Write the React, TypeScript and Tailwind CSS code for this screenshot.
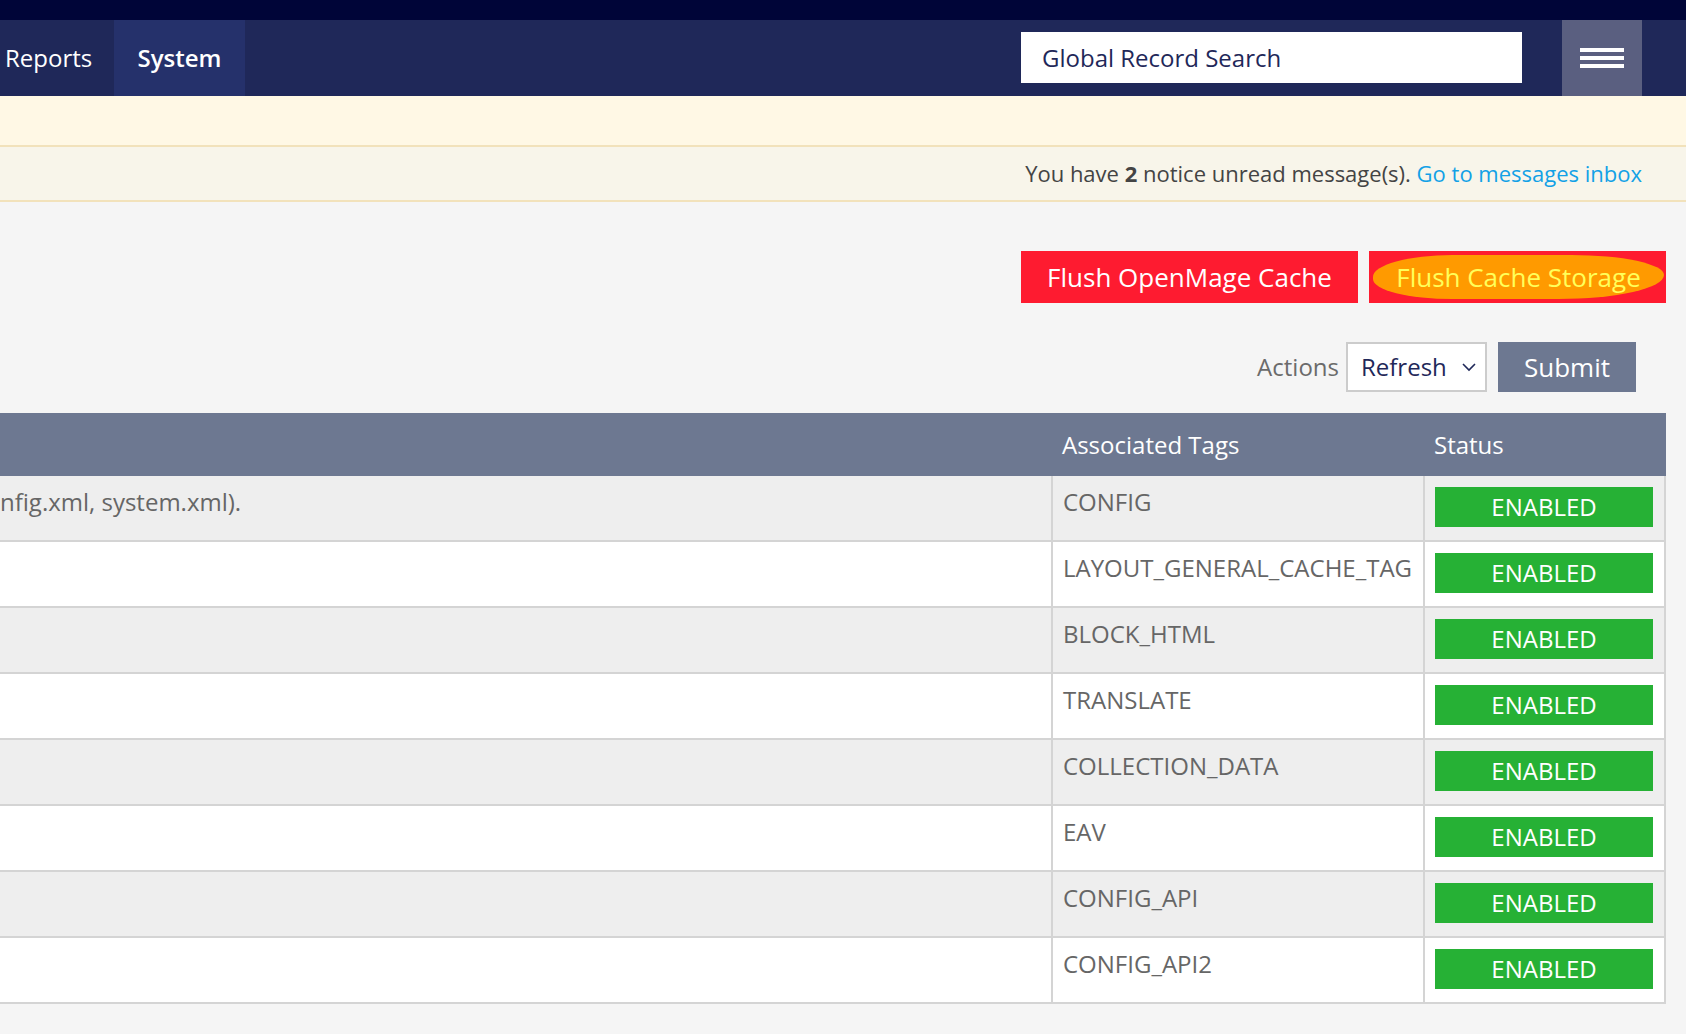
import React from "react";

const rows = [
    { desc: "nfig.xml, system.xml).", tag: "CONFIG" },
    { desc: "", tag: "LAYOUT_GENERAL_CACHE_TAG" },
    { desc: "", tag: "BLOCK_HTML" },
    { desc: "", tag: "TRANSLATE" },
    { desc: "", tag: "COLLECTION_DATA" },
    { desc: "", tag: "EAV" },
    { desc: "", tag: "CONFIG_API" },
    { desc: "", tag: "CONFIG_API2" },
];

const App: React.FC = () => {
    return (
        <div className="min-h-[1034px] w-[1686px] overflow-hidden bg-[#f5f5f5] font-['Open_Sans',sans-serif]">
            <div className="h-[20px] bg-[#000538]" />
            <nav className="flex h-[76px] items-stretch bg-[#1f2859] text-[24px] text-white">
                <div className="flex w-[114px] items-center pl-[5px]">Reports</div>
                <div className="flex w-[131px] items-center justify-center bg-[#25316b] font-semibold">System</div>
                <div className="flex-1" />
                <div className="mt-[12px] flex h-[51px] w-[501px] items-center bg-white pl-[21px] text-[#1f2859]">
                    Global Record Search
                </div>
                <button className="ml-[40px] flex w-[80px] flex-col items-center justify-center gap-[4px] bg-[#5a5f80]">
                    <span className="block h-[4px] w-[44px] bg-white" />
                    <span className="block h-[4px] w-[44px] bg-white" />
                    <span className="block h-[4px] w-[44px] bg-white" />
                </button>
                <div className="w-[44px]" />
            </nav>

            <div className="h-[51px] border-b-2 border-[#f2e2bb] bg-[#fff8e5]" />
            <div className="flex h-[55px] items-center justify-end border-b-2 border-[#f2e2bb] bg-[#f8f5ea] pr-[44px] text-[22px] text-[#444]">
                <span>
                    You have <b className="font-bold">2</b> notice unread message(s).{" "}
                    <a className="text-[#12a1e6]">Go to messages inbox</a>
                </span>
            </div>

            <div className="mt-[49px] flex justify-end gap-[11px] pr-[20px] text-[26px]">
                <button className="h-[52px] w-[337px] bg-[#fe1b30] text-white">Flush OpenMage Cache</button>
                <button className="flex h-[52px] w-[297px] items-center bg-[#fe1b30] pl-[4px] pr-[2px]">
                    <span className="flex h-[44px] w-full items-center justify-center rounded-[30%_35%_40%_30%/55%_50%_60%_50%] bg-[#ff9a00] text-[#ffff5a]">
                        Flush Cache Storage
                    </span>
                </button>
            </div>

            <div className="mt-[39px] flex items-center justify-end pr-[50px]">
                <span className="mr-[7px] text-[24px] text-[#6b6b6b]">Actions</span>
                <div className="flex h-[50px] w-[141px] items-center justify-between border-2 border-[#cccccc] bg-white pl-[13px] pr-[8px] text-[24px] text-[#1f2859]">
                    <span>Refresh</span>
                    <svg width="16" height="10" viewBox="0 0 16 10" fill="none" stroke="#1f2859" strokeWidth="1.6">
                        <path d="M2 2l6 6 6-6" />
                    </svg>
                </div>
                <button className="ml-[11px] h-[50px] w-[138px] bg-[#6d7891] text-[26px] text-white">Submit</button>
            </div>

            <div className="mt-[21px] mr-[20px] text-[24px]">
                <div className="grid h-[63px] grid-cols-[1fr_372px_241px] items-center bg-[#6d7891] text-white">
                    <div />
                    <div className="pl-[9px]">Associated Tags</div>
                    <div className="pl-[9px]">Status</div>
                </div>
                {rows.map((r, i) => (
                    <div
                        key={r.tag}
                        className={`grid h-[66px] grid-cols-[1fr_372px_241px] border-b-2 border-r-2 border-[#d4d4d4] text-[#666] ${
                            i % 2 === 0 ? "bg-[#eeeeee]" : "bg-white"
                        }`}
                    >
                        <div className="whitespace-nowrap pt-[8px]">{r.desc}</div>
                        <div className="border-l-2 border-[#d4d4d4] pt-[8px] pl-[10px]">{r.tag}</div>
                        <div className="border-l-2 border-[#d4d4d4] pl-[10px] pr-[11px] pt-[11px]">
                            <div className="flex h-[40px] items-center justify-center bg-[#26b135] text-[24px] text-white">
                                ENABLED
                            </div>
                        </div>
                    </div>
                ))}
            </div>
        </div>
    );
};

export default App;
